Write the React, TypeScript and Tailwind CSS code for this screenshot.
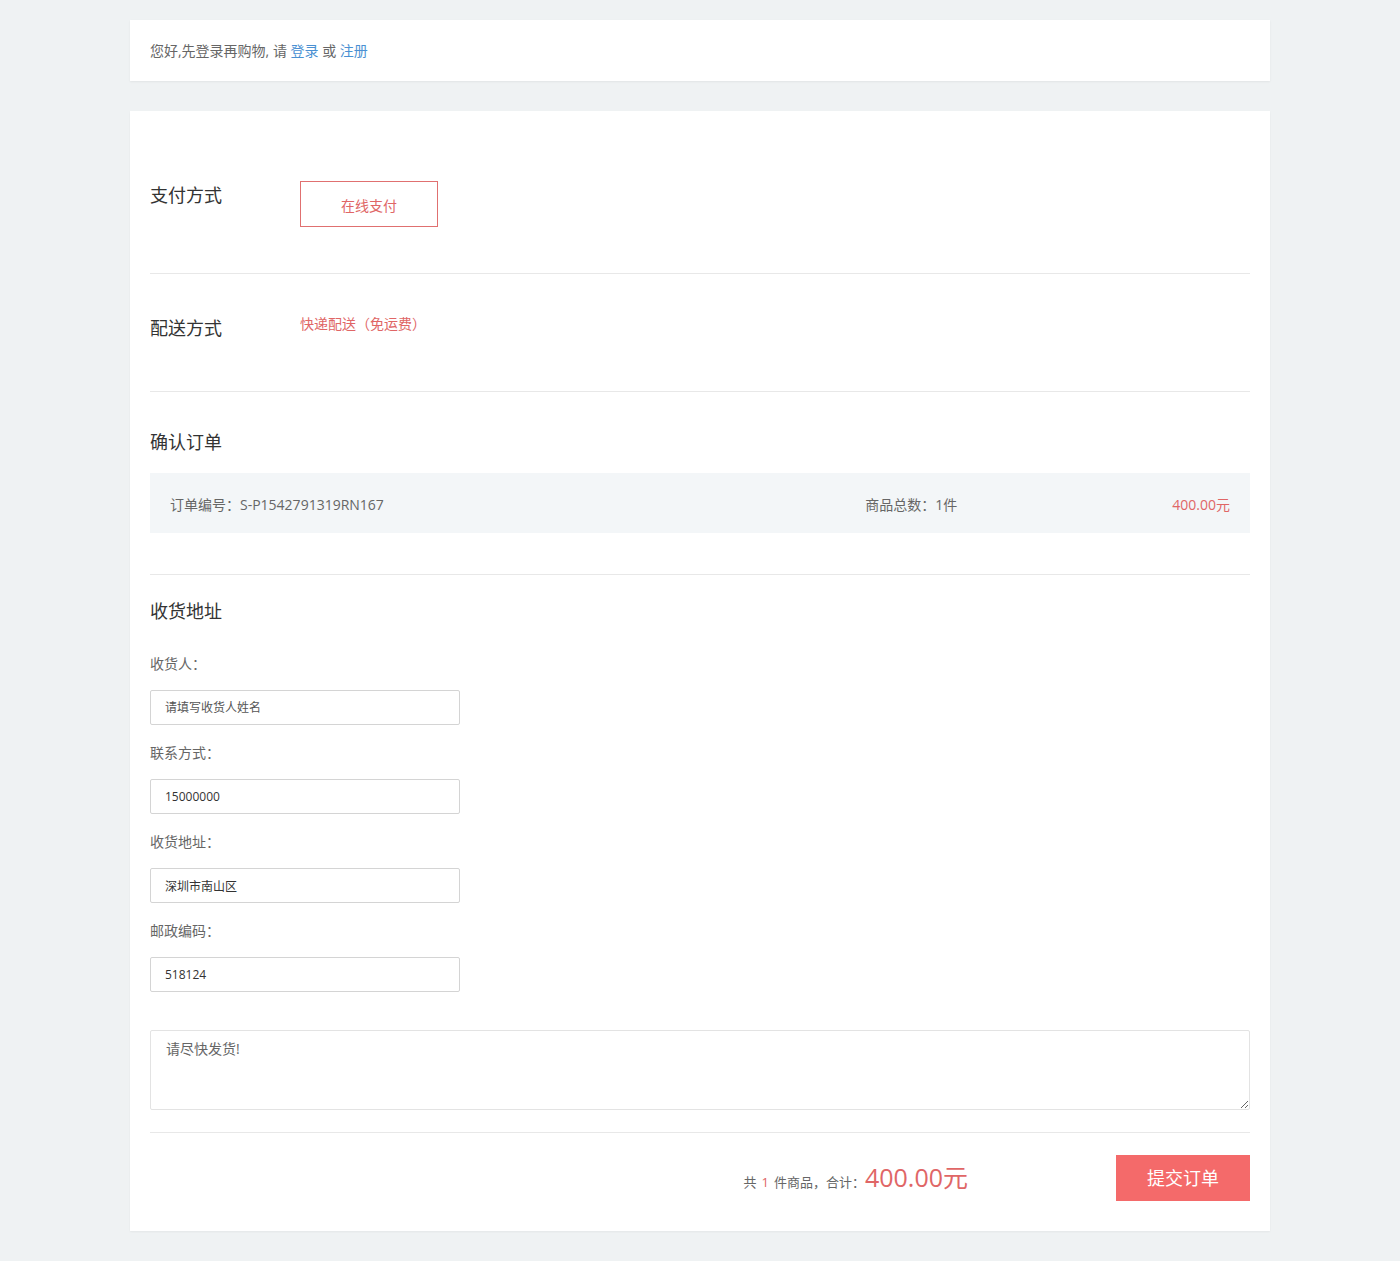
import React from "react";

const font = { fontFamily: '"Open Sans", "Noto Sans CJK SC", sans-serif' };

function Field({ label, value, placeholder }: { label: string; value?: string; placeholder?: string }) {
  return (
    <div className="flex flex-col">
      <div className="text-[14px] leading-[20px] text-[#666]">{label}</div>
      <input
        className="mt-4 h-[35px] w-[310px] rounded-[2px] border border-[#d4d4d4] px-[14px] text-[12px] text-[#333] placeholder:text-[#555] outline-none"
        defaultValue={value}
        placeholder={placeholder}
      />
    </div>
  );
}

export default function App() {
  return (
    <div className="min-h-[1261px] bg-[#eff2f3] pt-5" style={font}>
      <div className="mx-auto w-[1140px]">
        <div className="flex h-[61px] items-center bg-white px-5 text-[14px] text-[#666] shadow-[0_1px_2px_rgba(0,0,0,0.06)]">
          <span>您好,先登录再购物, 请&nbsp;</span>
          <a className="text-[#4a90d2]">登录</a>
          <span>&nbsp;或&nbsp;</span>
          <a className="text-[#4a90d2]">注册</a>
        </div>

        <div className="mt-[30px] bg-white px-5 pt-[70px] pb-[30px] shadow-[0_1px_2px_rgba(0,0,0,0.05)]">
          {/* 支付方式 */}
          <div className="flex items-start border-b border-[#e8e8e8] pb-[46px]">
            <div className="w-[150px] text-[18px] leading-[28px] text-[#333]">支付方式</div>
            <button className="h-[46px] w-[138px] border border-[#e07070] pt-[2px] text-[14px] text-[#e06666]">在线支付</button>
          </div>

          {/* 配送方式 */}
          <div className="flex items-start border-b border-[#e8e8e8] pt-[40px] pb-[49px]">
            <div className="w-[150px] text-[18px] leading-[28px] text-[#333]">配送方式</div>
            <div className="text-[14px] leading-[20px] text-[#e06666]">快递配送（免运费）</div>
          </div>

          {/* 确认订单 */}
          <div className="border-b border-[#e8e8e8] pt-[36px] pb-[41px]">
            <div className="text-[18px] leading-[28px] text-[#333]">确认订单</div>
            <div className="mt-[17px] flex h-[60px] items-center bg-[#f3f6f8] px-5 pt-[2px] text-[14px] text-[#666]">
              <div className="flex-1">订单编号：S-P1542791319RN167</div>
              <div className="w-[307px]">商品总数：1件</div>
              <div className="text-[#e06666]">400.00元</div>
            </div>
          </div>

          {/* 收货地址 */}
          <div className="border-b border-[#e8e8e8] pt-[22px] pb-[22px]">
            <div className="text-[18px] leading-[28px] text-[#333]">收货地址</div>
            <div className="mt-[29px] flex flex-col gap-[18px]">
              <Field label="收货人：" placeholder="请填写收货人姓名" />
              <Field label="联系方式：" value="15000000" />
              <Field label="收货地址：" value="深圳市南山区" />
              <Field label="邮政编码：" value="518124" />
            </div>
            <textarea
              className="mt-[38px] block h-[80px] w-full rounded-[2px] border border-[#e3e3e3] px-[15px] py-[7px] text-[14px] text-[#666] outline-none"
              defaultValue="请尽快发货!"
            />
          </div>

          {/* footer */}
          <div className="flex items-center justify-end pt-[22px]">
            <div className="mr-[148px] flex items-baseline text-[13px] text-[#666]">
              <span>共</span>
              <span className="mx-[5px] text-[#e06666]">1</span>
              <span>件商品，合计：</span>
              <span className="text-[25px] leading-[28px] text-[#e06666]">400.00元</span>
            </div>
            <button className="h-[46px] w-[134px] bg-[#f46a6a] text-[18px] text-white">提交订单</button>
          </div>
        </div>
      </div>
    </div>
  );
}
